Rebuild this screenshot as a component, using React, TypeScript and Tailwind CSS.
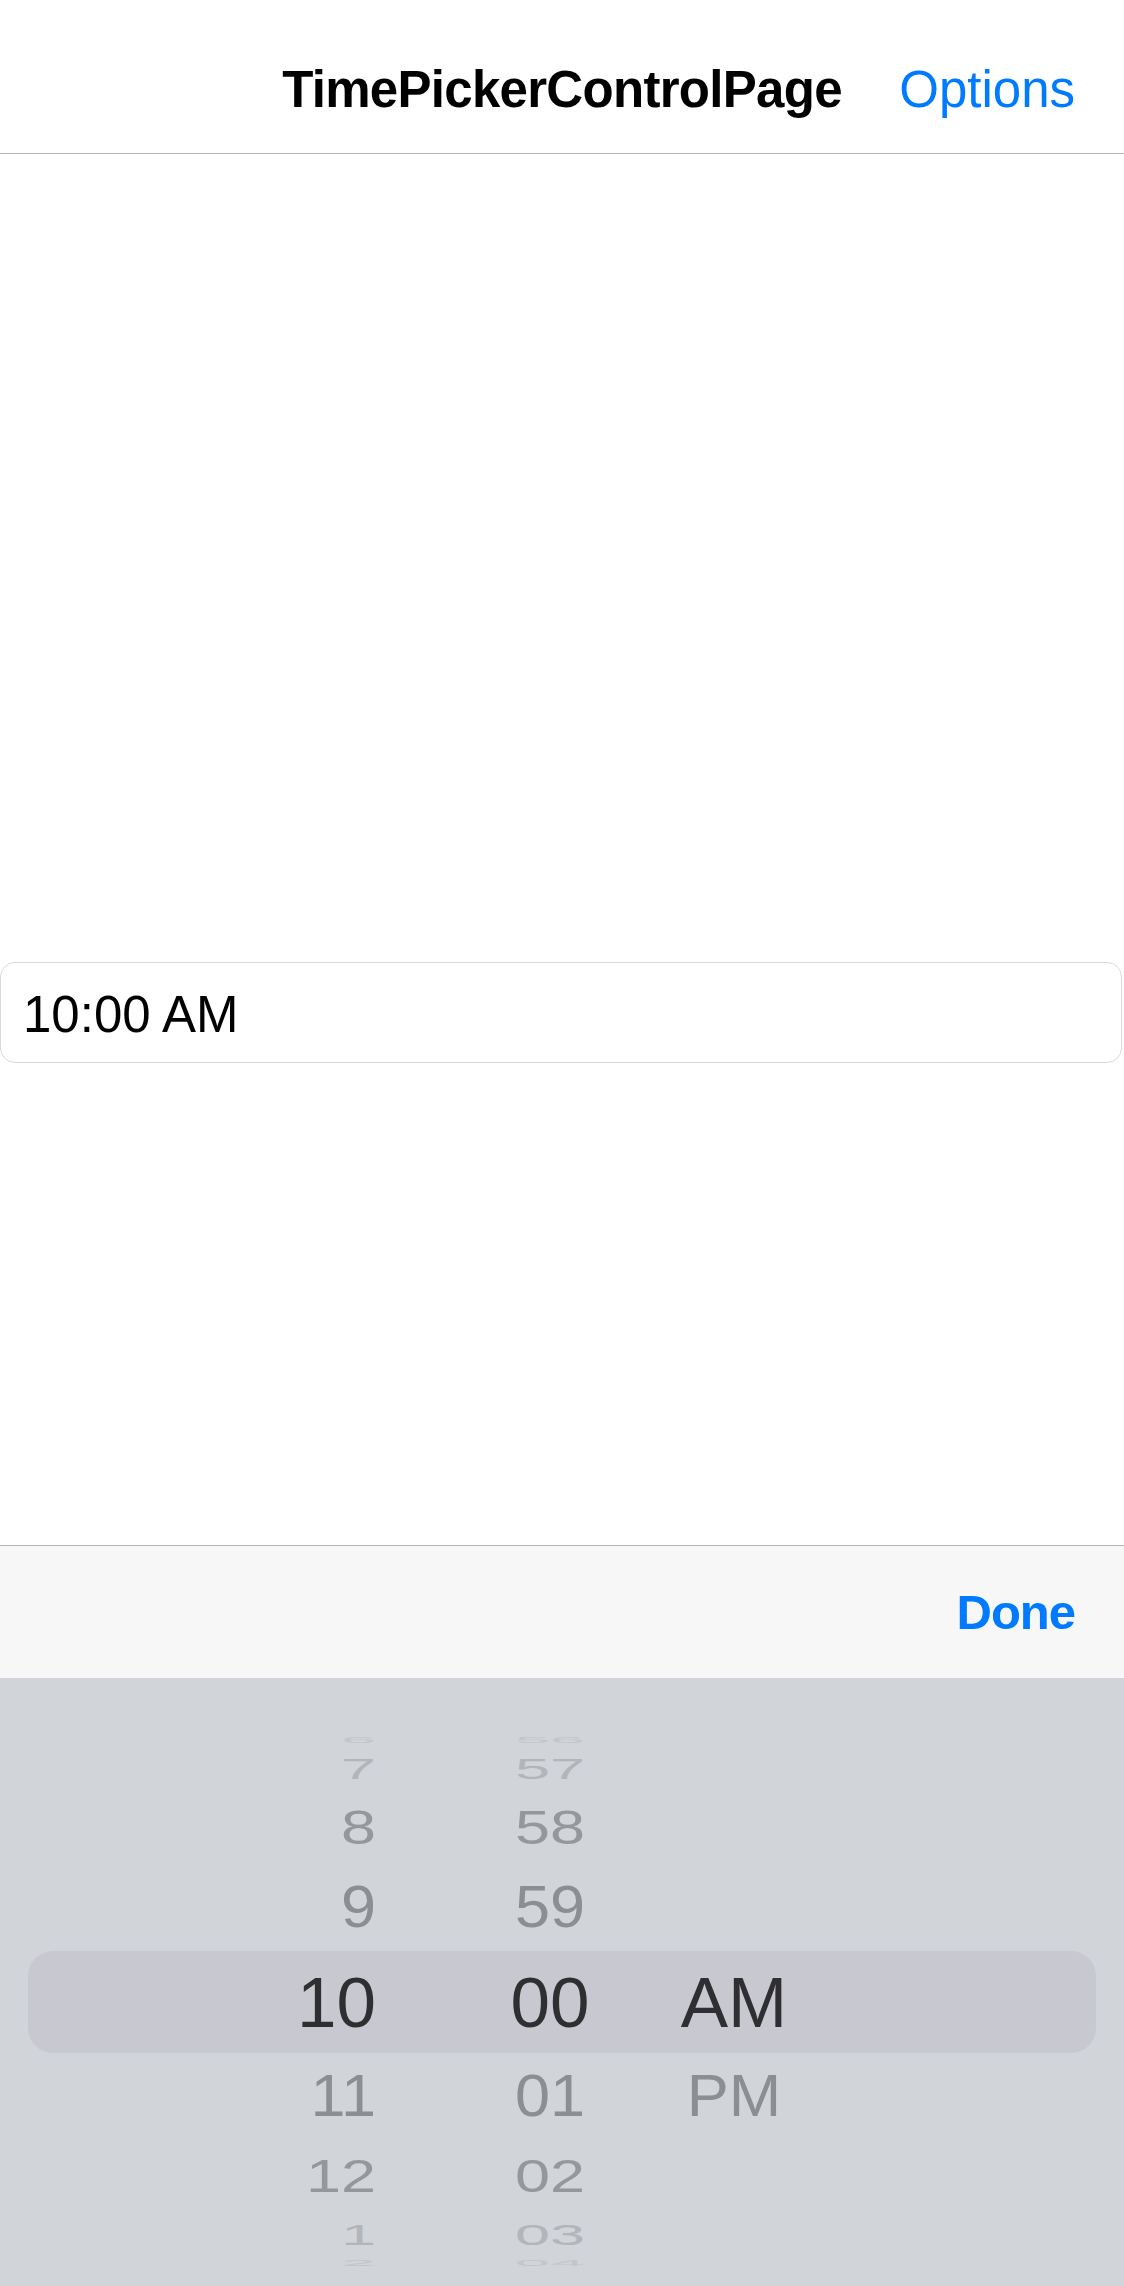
import React from 'react';

type WheelRow = {
  hour: string;
  minute: string;
  period: string;
  height: string;
  text: string;
  selected?: boolean;
};

// wheel rows, top to bottom; the far ones are squashed by the drum perspective
const wheelRows: WheelRow[] = [
  { hour: '6', minute: '56', period: '', height: 'h-[10px]', text: 'text-[63px] scale-y-[0.13] text-[#c4c6ca]' },
  { hour: '7', minute: '57', period: '', height: 'h-[46px]', text: 'text-[63px] scale-y-[0.48] text-[#b3b5b9]' },
  { hour: '8', minute: '58', period: '', height: 'h-[72px]', text: 'text-[63px] scale-y-[0.75] text-[#96979b]' },
  { hour: '9', minute: '59', period: '', height: 'h-[88px]', text: 'text-[63px] scale-y-[0.93] text-[#8d8e92]' },
  { hour: '10', minute: '00', period: 'AM', height: 'h-[102px]', text: 'text-[71px] text-[#2f2f31]', selected: true },
  { hour: '11', minute: '01', period: 'PM', height: 'h-[86px]', text: 'text-[63px] scale-y-[0.93] text-[#8d8e92]' },
  { hour: '12', minute: '02', period: '', height: 'h-[74px]', text: 'text-[63px] scale-y-[0.74] text-[#96979b]' },
  { hour: '1', minute: '03', period: '', height: 'h-[42px]', text: 'text-[63px] scale-y-[0.48] text-[#b3b5b9]' },
  { hour: '2', minute: '04', period: '', height: 'h-[16px]', text: 'text-[63px] scale-y-[0.13] text-[#c4c6ca]' },
];

const PickerRow = ({ row }: { row: WheelRow }) => (
  <div className="px-[28px]">
    <div
      className={`flex items-center ${row.height} ${
        row.selected ? 'rounded-[25px] bg-[#c8c9d0]' : ''
      }`}
    >
      <span className={`w-[348px] text-right leading-none ${row.text}`}>{row.hour}</span>
      <span className={`ml-[94px] w-[160px] text-center leading-none ${row.text}`}>{row.minute}</span>
      <span className={`ml-[24px] w-[160px] text-center leading-none ${row.text}`}>{row.period}</span>
    </div>
  </div>
);

const App = () => {
  return (
    <div className="flex h-[2286px] w-full flex-col overflow-hidden bg-white font-['Liberation_Sans',Arial,sans-serif]">
      {/* Nav bar */}
      <header className="grid h-[154px] grid-cols-[1fr_auto_1fr] items-start border-b border-[#b6b6b6] pt-[64px]">
        <div />
        <h1 className="text-[51px] font-bold leading-none tracking-[-0.7px] text-black">
          TimePickerControlPage
        </h1>
        <div className="flex justify-end pr-[49px]">
          <button className="text-[51px] leading-none text-[#007aff]">Options</button>
        </div>
      </header>

      {/* Page content */}
      <main className="h-[1391px]">
        <div className="mt-[808px] flex h-[101px] w-[1122px] items-center rounded-[15px] border border-[#d9d9d9] pl-[22px] pt-[4px] text-[51px] leading-none text-black">
          10:00 AM
        </div>
      </main>

      {/* Input accessory toolbar */}
      <div className="flex h-[133px] justify-end border-t border-[#b6b6b6] bg-[#f7f7f7] pr-[49px] pt-[42px]">
        <button className="h-fit text-[49px] font-bold leading-none tracking-[-1px] text-[#007aff]">Done</button>
      </div>

      {/* Wheel picker */}
      <div className="flex-1 bg-[#d1d4d9] pt-[57px]">
        {wheelRows.map((row) => (
          <PickerRow key={row.hour} row={row} />
        ))}
      </div>
    </div>
  );
};

export default App;
